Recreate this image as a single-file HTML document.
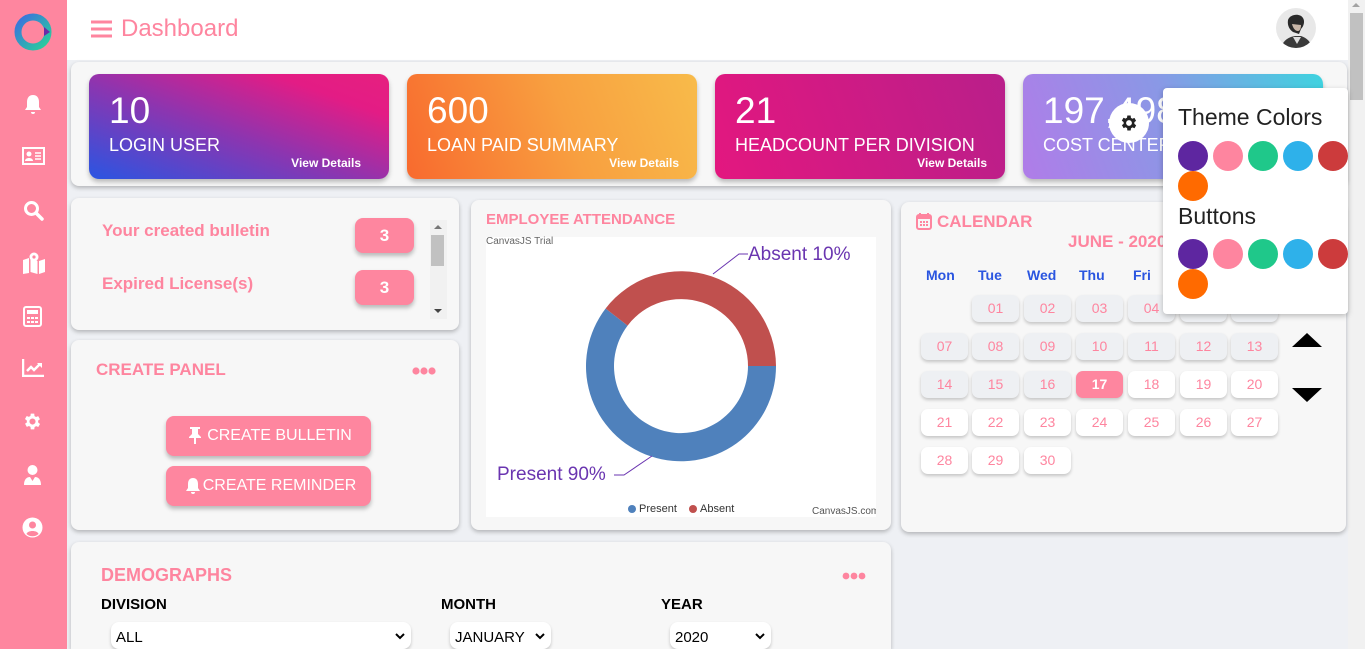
<!DOCTYPE html>
<html><head><meta charset="utf-8"><style>
*{box-sizing:border-box;margin:0;padding:0}
html,body{width:1365px;height:649px;overflow:hidden}
body{background:#eef0f4;font-family:"Liberation Sans",sans-serif;position:relative}
.abs{position:absolute}
.side{left:0;top:0;width:67px;height:649px;background:#fe869f}
.hdr{left:67px;top:0;width:1281px;height:60px;background:#fff}
.sb{left:1348px;top:0;width:17px;height:649px;background:#f1f1f1}
.panel{background:#f7f7f7;border-radius:8px;box-shadow:0 2px 4px rgba(0,0,0,.25)}
.card{border-radius:10px;color:#fff;box-shadow:0 3px 5px rgba(0,0,0,.25)}
.card .n{position:absolute;left:20px;top:16px;font-size:37px}
.card .l{position:absolute;left:20px;top:61px;font-size:18px}
.card .v{position:absolute;right:28px;top:82px;font-size:12px;font-weight:bold}
.pink{color:#fe859f}
.btn{background:#fe869f;color:#fff;border-radius:8px;box-shadow:0 3px 4px rgba(0,0,0,.25);font-size:16px;text-align:center}
.cell{position:absolute;width:47px;height:27px;border-radius:7px;background:#eef0f3;color:#fe859f;font-size:14px;text-align:center;line-height:27px;box-shadow:0 2px 3px rgba(0,0,0,.2)}
.cell.w{background:#fff}
.dot{position:absolute;width:30px;height:30px;border-radius:50%}
.wd{position:absolute;top:267px;color:#2a55e0;font-weight:bold;font-size:14px}
.sel{position:absolute;top:622px;height:30px;background:#fff;border-radius:8px;box-shadow:0 2px 3px rgba(0,0,0,.2);font-size:15px;padding:7px 5px;color:#000}
.sel svg{position:absolute;right:6px;top:11px}
.lab{position:absolute;top:596px;font-weight:bold;font-size:15px;color:#000}
</style></head><body>
<div class="abs side">
 <svg class="abs" style="left:13px;top:12px" width="40" height="40" viewBox="0 0 40 40"><defs><linearGradient id="lg" x1="0" y1="0" x2="1" y2="1"><stop offset="0" stop-color="#3b6fe0"/><stop offset="1" stop-color="#2ad19a"/></linearGradient></defs><circle cx="20" cy="20" r="15" fill="none" stroke="url(#lg)" stroke-width="7"/><path d="M31 15 L37 20 L31 24Z" fill="#6a2aa8"/></svg>
 <svg class="abs" style="left:22px;top:93px" width="22" height="22" viewBox="0 0 22 22" fill="#fff"><path d="M11 2c-4 0-6 3-6 7v5l-2 3h16l-2-3V9c0-4-2-7-6-7zM9 19h4a2 2 0 0 1-4 0z"/></svg>
 <svg class="abs" style="left:22px;top:147px" width="23" height="18" viewBox="0 0 23 18"><rect x="1" y="1" width="21" height="16" fill="none" stroke="#fff" stroke-width="2"/><circle cx="7" cy="7" r="2.5" fill="#fff"/><path d="M3 14c0-4 8-4 8 0z" fill="#fff"/><path d="M13 6h6M13 9h6M13 12h6" stroke="#fff" stroke-width="1.6"/></svg>
 <svg class="abs" style="left:23px;top:200px" width="21" height="21" viewBox="0 0 21 21"><circle cx="8.5" cy="8.5" r="6" fill="none" stroke="#fff" stroke-width="3"/><path d="M13 13l6 6" stroke="#fff" stroke-width="3.5" stroke-linecap="round"/></svg>
 <svg class="abs" style="left:22px;top:252px" width="24" height="22" viewBox="0 0 24 22" fill="#fff"><path d="M1 8l6-2v15l-6 1zM8.5 7l7 2v13l-7-2zM17 9l6-2v13l-6 2z"/><circle cx="12" cy="5" r="4.5"/><circle cx="12" cy="5" r="1.6" fill="#fe869f"/></svg>
 <svg class="abs" style="left:23px;top:306px" width="19" height="21" viewBox="0 0 19 21"><rect x="1" y="1" width="17" height="19" rx="2" fill="none" stroke="#fff" stroke-width="2"/><rect x="4" y="4" width="11" height="4" fill="#fff"/><g fill="#fff"><rect x="4" y="11" width="3" height="2"/><rect x="8" y="11" width="3" height="2"/><rect x="12" y="11" width="3" height="2"/><rect x="4" y="15" width="3" height="2"/><rect x="8" y="15" width="3" height="2"/><rect x="12" y="15" width="3" height="2"/></g></svg>
 <svg class="abs" style="left:22px;top:359px" width="22" height="18" viewBox="0 0 22 18"><path d="M1 0v17h21" stroke="#fff" stroke-width="2.5" fill="none"/><path d="M5 12l4-4 3 3 6-6" stroke="#fff" stroke-width="2.5" fill="none"/><path d="M15 4h5v5z" fill="#fff"/></svg>
 <svg class="abs" style="left:22px;top:411px" width="21" height="21" viewBox="0 0 24 24" fill="#fff"><path d="M19.4 13a7.5 7.5 0 0 0 0-2l2.1-1.6-2-3.5-2.5 1a7.5 7.5 0 0 0-1.7-1L15 3h-4l-.4 2.7a7.5 7.5 0 0 0-1.7 1l-2.5-1-2 3.5L6.6 11a7.5 7.5 0 0 0 0 2l-2.1 1.6 2 3.5 2.5-1a7.5 7.5 0 0 0 1.7 1L11 21h4l.4-2.7a7.5 7.5 0 0 0 1.7-1l2.5 1 2-3.5zM13 15.5a3.5 3.5 0 1 1 0-7 3.5 3.5 0 0 1 0 7z" transform="translate(-1 0)"/></svg>
 <svg class="abs" style="left:23px;top:464px" width="19" height="22" viewBox="0 0 19 22" fill="#fff"><circle cx="9.5" cy="6" r="5"/><path d="M1 21c0-6 3-8 6-8l2.5 4 2.5-4c3 0 6 2 6 8z"/></svg>
 <svg class="abs" style="left:22px;top:517px" width="21" height="21" viewBox="0 0 21 21"><circle cx="10.5" cy="10.5" r="10" fill="#fff"/><circle cx="10.5" cy="8" r="3.5" fill="#fe869f"/><path d="M4.5 17c1-4 11-4 12 0a9 9 0 0 1-12 0z" fill="#fe869f"/></svg>
</div>
<div class="abs hdr">
 <svg class="abs" style="left:24px;top:20px" width="21" height="18" viewBox="0 0 21 18"><path d="M0 2h21M0 9h21M0 16h21" stroke="#fe859f" stroke-width="3"/></svg>
 <div class="abs pink" style="left:54px;top:15px;font-size:24px">Dashboard</div>
 <svg class="abs" style="left:1209px;top:8px" width="40" height="40" viewBox="0 0 40 40"><defs><clipPath id="av"><circle cx="20" cy="20" r="20"/></clipPath></defs><g clip-path="url(#av)"><rect width="40" height="40" fill="#e8e8e8"/><path d="M12 12c2-6 12-7 15-2 2 3 1 8-2 11l-2 5-6-2c-3-2-6-6-5-12z" fill="#2a2a2a"/><path d="M16 16c1 4 3 7 6 7 2 0 3-3 3-6" fill="#c9b7a8"/><path d="M5 40c2-8 8-11 14-12l6 0c6 2 10 6 11 12z" fill="#3a3a3a"/><path d="M17 29l4 7 4-7z" fill="#ddd"/></g></svg>
</div>
<div class="abs sb"><div class="abs" style="left:2px;top:13px;width:13px;height:87px;background:#c1c1c1"></div><div class="abs" style="left:4px;top:3px;border:4px solid transparent;border-bottom-color:#a3a3a3;border-top:0"></div></div>

<div class="abs panel" style="left:71px;top:62px;width:1276px;height:124px"></div>
<div class="abs card" style="left:89px;top:74px;width:300px;height:105px;background:linear-gradient(20deg,#2a55e2 0%,#8c35b0 45%,#e31c85 80%,#e6207f 100%)"><div class="n">10</div><div class="l">LOGIN USER</div><div class="v">View Details</div></div>
<div class="abs card" style="left:407px;top:74px;width:290px;height:105px;background:linear-gradient(70deg,#f86a2e 0%,#f8a040 55%,#f8bb4a 100%)"><div class="n">600</div><div class="l">LOAN PAID SUMMARY</div><div class="v" style="right:18px">View Details</div></div>
<div class="abs card" style="left:715px;top:74px;width:290px;height:105px;background:linear-gradient(70deg,#e3177f,#b91f8a)"><div class="n">21</div><div class="l">HEADCOUNT PER DIVISION</div><div class="v" style="right:18px">View Details</div></div>
<div class="abs card" style="left:1023px;top:74px;width:300px;height:105px;background:linear-gradient(70deg,#b07ce8 0%,#8a98e6 50%,#3ed3df 100%)"><div class="n">197,498</div><div class="l">COST CENTER</div></div>

<div class="abs panel" style="left:71px;top:198px;width:388px;height:132px">
 <div class="abs pink" style="left:31px;top:23px;font-size:17px;font-weight:bold">Your created bulletin</div>
 <div class="abs pink" style="left:31px;top:76px;font-size:17px;font-weight:bold">Expired License(s)</div>
 <div class="abs btn" style="left:284px;top:20px;width:59px;height:35px;line-height:35px;font-size:17px;font-weight:bold">3</div>
 <div class="abs btn" style="left:284px;top:72px;width:59px;height:35px;line-height:35px;font-size:17px;font-weight:bold">3</div>
 <div class="abs" style="left:359px;top:22px;width:17px;height:99px;background:#f1f1f1"><div class="abs" style="left:1px;top:15px;width:13px;height:31px;background:#c1c1c1"></div><div class="abs" style="left:4px;top:5px;border:4px solid transparent;border-bottom-color:#777;border-top:0"></div><div class="abs" style="left:4px;top:89px;border:4px solid transparent;border-top-color:#444;border-bottom:0"></div></div>
</div>
<div class="abs panel" style="left:71px;top:340px;width:388px;height:190px">
 <div class="abs pink" style="left:25px;top:20px;font-size:17px;font-weight:bold">CREATE PANEL</div>
 <svg class="abs" style="left:341px;top:27px" width="24" height="8"><circle cx="4" cy="4" r="3.6" fill="#fe859f"/><circle cx="12" cy="4" r="3.6" fill="#fe859f"/><circle cx="20" cy="4" r="3.6" fill="#fe859f"/></svg>
 <div class="abs btn" style="left:95px;top:76px;width:205px;height:40px;line-height:40px;padding-left:22px">CREATE BULLETIN</div>
 <svg class="abs" style="left:117px;top:87px" width="14" height="17" viewBox="0 0 14 17" fill="#fff"><path d="M2 0h10v2h-2v5l3 3v1H1v-1l3-3V2H2z"/><rect x="6" y="11" width="2" height="6"/></svg>
 <div class="abs btn" style="left:95px;top:126px;width:205px;height:40px;line-height:40px;padding-left:22px">CREATE REMINDER</div>
 <svg class="abs" style="left:114px;top:137px" width="16" height="17" viewBox="0 0 16 17" fill="#fff"><path d="M8 1c-3 0-5 2-5 6v4l-2 3h14l-2-3V7c0-4-2-6-5-6zM6 15h4a2 2 0 0 1-4 0z"/></svg>
</div>

<div class="abs panel" style="left:471px;top:200px;width:420px;height:330px">
 <div class="abs pink" style="left:15px;top:11px;font-size:15px;font-weight:bold">EMPLOYEE ATTENDANCE</div>
 <div class="abs" style="left:15px;top:37px;width:390px;height:280px;background:#fff">
  <div class="abs" style="left:0;top:-1px;font-size:10px;color:#666">CanvasJS Trial</div>
  <svg class="abs" style="left:0;top:0" width="390" height="280">
   <path d="M290 129 A95 95 0 1 1 119.6 71.5 L141.6 88.6 A67 67 0 1 0 262 129Z" fill="#4f81bc"/>
   <path d="M119.6 71.5 A95 95 0 0 1 290 129 L262 129 A67 67 0 0 0 141.6 88.6Z" fill="#c0504e"/>
   <path d="M227 37 L253 17 L262 17" stroke="#6a35b0" fill="none"/>
   <path d="M166 219 L138 238 L128 238" stroke="#6a35b0" fill="none"/>
   <text x="262" y="23" font-size="19" fill="#6a35b0" font-family="Liberation Sans">Absent 10%</text>
   <text x="11" y="243" font-size="19" fill="#6a35b0" font-family="Liberation Sans">Present 90%</text>
   <circle cx="146" cy="272" r="4" fill="#4f81bc"/><text x="153" y="275" font-size="11" fill="#333" font-family="Liberation Sans">Present</text>
   <circle cx="207" cy="272" r="4" fill="#c0504e"/><text x="214" y="275" font-size="11" fill="#333" font-family="Liberation Sans">Absent</text>
   <text x="326" y="277" font-size="10" fill="#555" font-family="Liberation Sans">CanvasJS.com</text>
  </svg>
 </div>
</div>

<div class="abs panel" style="left:901px;top:202px;width:445px;height:330px">
 <svg class="abs" style="left:15px;top:10px" width="16" height="18" viewBox="0 0 16 18"><rect x="1" y="3" width="14" height="14" rx="2" fill="none" stroke="#fe859f" stroke-width="2"/><rect x="1" y="3" width="14" height="4" fill="#fe859f"/><path d="M4 1v4M12 1v4" stroke="#fe859f" stroke-width="2"/><g fill="#fe859f"><rect x="4" y="9" width="2" height="2"/><rect x="7" y="9" width="2" height="2"/><rect x="10" y="9" width="2" height="2"/><rect x="4" y="12" width="2" height="2"/><rect x="7" y="12" width="2" height="2"/><rect x="10" y="12" width="2" height="2"/></g></svg>
 <div class="abs pink" style="left:36px;top:10px;font-size:17px;font-weight:bold">CALENDAR</div>
 <div class="abs pink" style="left:167px;top:30px;font-size:17px;font-weight:bold">JUNE - 2020</div>
 <svg class="abs" style="left:391px;top:131px" width="30" height="14"><path d="M0 14L15 0L30 14Z" fill="#000"/></svg>
 <svg class="abs" style="left:391px;top:186px" width="30" height="14"><path d="M0 0L15 14L30 0Z" fill="#000"/></svg>
</div>
<div class="wd" style="left:926px">Mon</div><div class="wd" style="left:978px">Tue</div><div class="wd" style="left:1027px">Wed</div><div class="wd" style="left:1079px">Thu</div><div class="wd" style="left:1133px">Fri</div>
<div class="cell" style="left:972px;top:295px">01</div><div class="cell" style="left:1024px;top:295px">02</div><div class="cell" style="left:1076px;top:295px">03</div><div class="cell" style="left:1128px;top:295px">04</div><div class="cell" style="left:1180px;top:295px">05</div><div class="cell" style="left:1231px;top:295px">06</div>
<div class="cell" style="left:921px;top:333px">07</div><div class="cell" style="left:972px;top:333px">08</div><div class="cell" style="left:1024px;top:333px">09</div><div class="cell" style="left:1076px;top:333px">10</div><div class="cell" style="left:1128px;top:333px">11</div><div class="cell" style="left:1180px;top:333px">12</div><div class="cell" style="left:1231px;top:333px">13</div>
<div class="cell" style="left:921px;top:371px">14</div><div class="cell" style="left:972px;top:371px">15</div><div class="cell" style="left:1024px;top:371px">16</div><div class="cell" style="left:1076px;top:371px;background:#fe869f;color:#fff;font-weight:bold">17</div><div class="cell w" style="left:1128px;top:371px">18</div><div class="cell w" style="left:1180px;top:371px">19</div><div class="cell w" style="left:1231px;top:371px">20</div>
<div class="cell w" style="left:921px;top:409px">21</div><div class="cell w" style="left:972px;top:409px">22</div><div class="cell w" style="left:1024px;top:409px">23</div><div class="cell w" style="left:1076px;top:409px">24</div><div class="cell w" style="left:1128px;top:409px">25</div><div class="cell w" style="left:1180px;top:409px">26</div><div class="cell w" style="left:1231px;top:409px">27</div>
<div class="cell w" style="left:921px;top:447px">28</div><div class="cell w" style="left:972px;top:447px">29</div><div class="cell w" style="left:1024px;top:447px">30</div>

<div class="abs panel" style="left:71px;top:542px;width:820px;height:107px;border-radius:8px 8px 0 0">
 <div class="abs pink" style="left:30px;top:23px;font-size:18px;font-weight:bold">DEMOGRAPHS</div>
 <svg class="abs" style="left:771px;top:30px" width="24" height="8"><circle cx="4" cy="4" r="3.4" fill="#fe859f"/><circle cx="12" cy="4" r="3.4" fill="#fe859f"/><circle cx="20" cy="4" r="3.4" fill="#fe859f"/></svg>
</div>
<div class="lab" style="left:101px">DIVISION</div><div class="lab" style="left:441px">MONTH</div><div class="lab" style="left:661px">YEAR</div>
<div class="sel" style="left:111px;width:300px;height:27px">ALL<svg width="10" height="7"><path d="M1 1l4 4 4-4" stroke="#000" stroke-width="2" fill="none"/></svg></div>
<div class="sel" style="left:450px;width:101px;height:27px">JANUARY<svg width="10" height="7"><path d="M1 1l4 4 4-4" stroke="#000" stroke-width="2" fill="none"/></svg></div>
<div class="sel" style="left:670px;width:101px;height:27px">2020<svg width="10" height="7"><path d="M1 1l4 4 4-4" stroke="#000" stroke-width="2" fill="none"/></svg></div>

<div class="abs" style="left:1163px;top:88px;width:185px;height:226px;background:#fff;border-radius:4px;box-shadow:0 2px 6px rgba(0,0,0,.25)">
 <div class="abs" style="left:15px;top:16px;font-size:23px;color:#222">Theme Colors</div>
 <div class="dot" style="left:15px;top:53px;background:#5e26a0"></div><div class="dot" style="left:50px;top:53px;background:#fe859f"></div><div class="dot" style="left:85px;top:53px;background:#1fc88a"></div><div class="dot" style="left:120px;top:53px;background:#2eb1ea"></div><div class="dot" style="left:155px;top:53px;background:#cc3b3c"></div><div class="dot" style="left:15px;top:83px;background:#ff6a00"></div>
 <div class="abs" style="left:15px;top:115px;font-size:23px;color:#222">Buttons</div>
 <div class="dot" style="left:15px;top:151px;background:#5e26a0"></div><div class="dot" style="left:50px;top:151px;background:#fe859f"></div><div class="dot" style="left:85px;top:151px;background:#1fc88a"></div><div class="dot" style="left:120px;top:151px;background:#2eb1ea"></div><div class="dot" style="left:155px;top:151px;background:#cc3b3c"></div><div class="dot" style="left:15px;top:181px;background:#ff6a00"></div>
</div>
<div class="abs" style="left:1109px;top:103px;width:40px;height:40px;border-radius:50%;background:#fff"><svg class="abs" style="left:10px;top:10px" width="20" height="20" viewBox="0 0 24 24" fill="#222"><path d="M19.4 13a7.5 7.5 0 0 0 0-2l2.1-1.6-2-3.5-2.5 1a7.5 7.5 0 0 0-1.7-1L15 3h-4l-.4 2.7a7.5 7.5 0 0 0-1.7 1l-2.5-1-2 3.5L6.6 11a7.5 7.5 0 0 0 0 2l-2.1 1.6 2 3.5 2.5-1a7.5 7.5 0 0 0 1.7 1L11 21h4l.4-2.7a7.5 7.5 0 0 0 1.7-1l2.5 1 2-3.5zM13 15.5a3.5 3.5 0 1 1 0-7 3.5 3.5 0 0 1 0 7z" transform="translate(-1 0)"/></svg></div>
</body></html>
